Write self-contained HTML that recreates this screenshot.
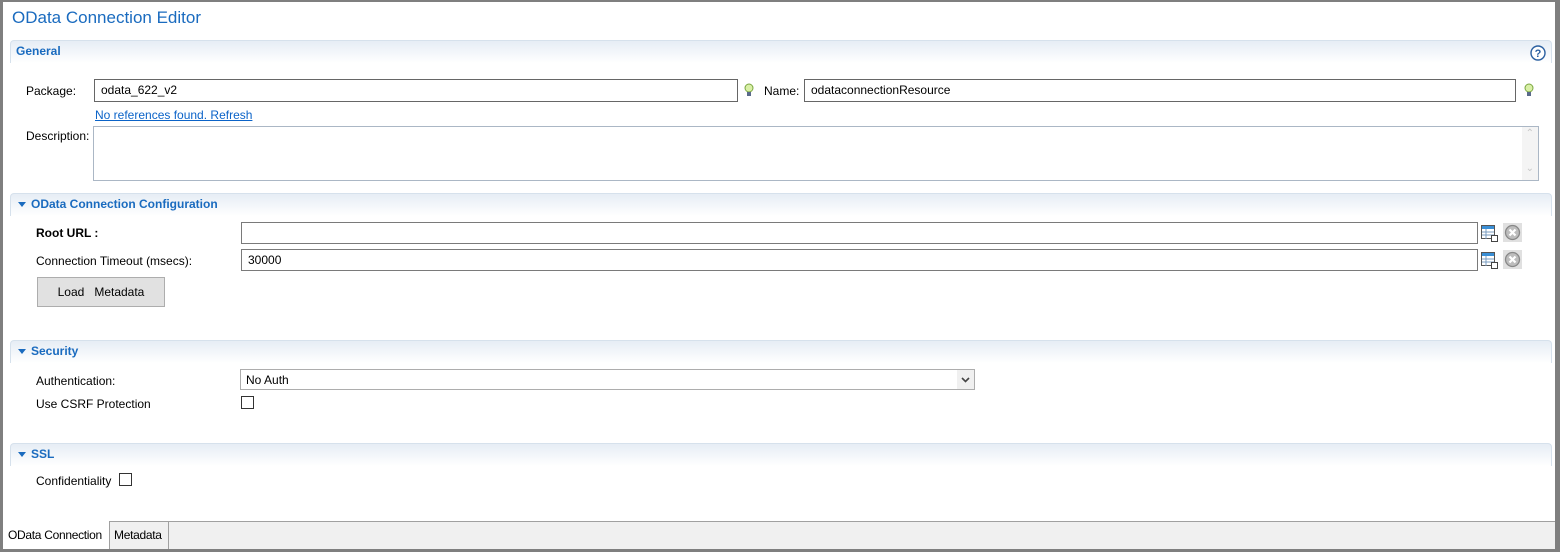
<!DOCTYPE html>
<html><head><meta charset="utf-8"><style>
*{margin:0;padding:0;box-sizing:border-box}
body{width:1560px;height:552px;background:#7f7f7f;font-family:"Liberation Sans",sans-serif;font-size:12px;color:#000;position:relative;overflow:hidden}
#main{position:absolute;left:3px;top:2px;width:1552px;height:547px;background:#fff}
.a{position:absolute;white-space:nowrap}
.title{left:9px;top:6px;font-size:17px;color:#1a6bbf}
.hdr{position:absolute;left:7px;width:1542px;height:23px;border:1px solid #d6e1ec;border-bottom:none;border-radius:4px 4px 0 0;background:linear-gradient(#e6edf5,#ffffff)}
.hdr span{position:absolute;top:3px;font-weight:bold;color:#1a6bbf;font-size:12px}
.tri{position:absolute;left:7px;top:8px;width:0;height:0;border-left:4px solid transparent;border-right:4px solid transparent;border-top:5px solid #1a6bbf}
.inp{position:absolute;border:1px solid #7a7a7a;background:#fff;padding-left:6px;line-height:21px}
.chk{position:absolute;width:13px;height:13px;border:1px solid #333;background:#fff}
.link{color:#0b63c8;text-decoration:underline}
</style></head><body>
<div id="main">
<div class="a title">OData Connection Editor</div>

<div class="hdr" style="top:38px"><span style="left:5px">General</span>
<svg style="position:absolute;right:5px;top:4px" width="16" height="16" viewBox="0 0 16 16"><circle cx="8" cy="8" r="7" fill="#fff" stroke="#2a5fa0" stroke-width="1.4"/><text x="8" y="12" font-size="11" font-weight="bold" text-anchor="middle" fill="#2a5fa0" font-family="Liberation Sans">?</text></svg></div>

<div class="a" style="left:23px;top:82px">Package:</div>
<div class="inp" style="left:91px;top:77px;width:644px;height:23px;border-color:#666">odata_622_v2</div>
<svg class="a" style="left:741px;top:81px" width="10" height="14" viewBox="0 0 10 14"><circle cx="5" cy="5" r="4" fill="#d9f0a6" stroke="#7aa640"/><rect x="3" y="9" width="4" height="4" fill="#5a6a8a"/></svg>
<div class="a" style="left:761px;top:82px">Name:</div>
<div class="inp" style="left:801px;top:77px;width:712px;height:23px;border-color:#666">odataconnectionResource</div>
<svg class="a" style="left:1521px;top:81px" width="10" height="14" viewBox="0 0 10 14"><circle cx="5" cy="5" r="4" fill="#d9f0a6" stroke="#7aa640"/><rect x="3" y="9" width="4" height="4" fill="#5a6a8a"/></svg>
<div class="a link" style="left:92px;top:106px">No references found. Refresh</div>
<div class="a" style="left:23px;top:127px">Description:</div>
<div style="position:absolute;left:90px;top:124px;width:1446px;height:55px;border:1px solid #abb7c5;background:#fff">
<div style="position:absolute;right:0;top:0;width:16px;height:53px;background:#f4f4f4"></div>
<div class="a" style="right:4px;top:1px;color:#c8c8c8;font-size:10px">&#8963;</div>
<div class="a" style="right:4px;top:36px;color:#c8c8c8;font-size:10px">&#8964;</div>
</div>

<div class="hdr" style="top:191px"><div class="tri"></div><span style="left:20px">OData Connection Configuration</span></div>
<div class="a" style="left:33px;top:224px;font-weight:bold">Root URL :</div>
<div class="inp" style="left:238px;top:220px;width:1237px;height:22px"></div>
<div class="a" style="left:33px;top:252px">Connection Timeout (msecs):</div>
<div class="inp" style="left:238px;top:247px;width:1237px;height:22px">30000</div>
<svg class="a" style="left:1478px;top:223px" width="18" height="18" viewBox="0 0 18 18"><rect x="0.5" y="0.5" width="13" height="13" fill="#fff" stroke="#555"/><rect x="1" y="1" width="12" height="3" fill="#3a8fd6"/><path d="M1 7h12M1 10h12M5 4v10" stroke="#7a9cc0"/><rect x="10.5" y="10.5" width="6" height="6" fill="#fff" stroke="#444"/></svg>
<svg class="a" style="left:1500px;top:221px" width="19" height="19" viewBox="0 0 19 19"><rect width="19" height="19" fill="#e0e0e0"/><circle cx="9.5" cy="9.5" r="7" fill="#bdbdbd" stroke="#888" stroke-width="1.3"/><path d="M6.5 6.5l6 6M12.5 6.5l-6 6" stroke="#fff" stroke-width="2.2"/></svg>
<svg class="a" style="left:1478px;top:250px" width="18" height="18" viewBox="0 0 18 18"><rect x="0.5" y="0.5" width="13" height="13" fill="#fff" stroke="#555"/><rect x="1" y="1" width="12" height="3" fill="#3a8fd6"/><path d="M1 7h12M1 10h12M5 4v10" stroke="#7a9cc0"/><rect x="10.5" y="10.5" width="6" height="6" fill="#fff" stroke="#444"/></svg>
<svg class="a" style="left:1500px;top:248px" width="19" height="19" viewBox="0 0 19 19"><rect width="19" height="19" fill="#e0e0e0"/><circle cx="9.5" cy="9.5" r="7" fill="#bdbdbd" stroke="#888" stroke-width="1.3"/><path d="M6.5 6.5l6 6M12.5 6.5l-6 6" stroke="#fff" stroke-width="2.2"/></svg>
<div style="position:absolute;left:34px;top:275px;width:128px;height:30px;background:#e1e1e1;border:1px solid #adadad;text-align:center;line-height:28px">Load&nbsp;&nbsp; Metadata</div>

<div class="hdr" style="top:338px"><div class="tri"></div><span style="left:20px">Security</span></div>
<div class="a" style="left:33px;top:372px">Authentication:</div>
<div style="position:absolute;left:237px;top:367px;width:735px;height:21px;border:1px solid #adadad;background:#fff;padding-left:5px;line-height:20px">No Auth
<div style="position:absolute;right:0;top:0;width:17px;height:19px;background:#f0f0f0"></div>
<svg style="position:absolute;right:4px;top:7px" width="9" height="6" viewBox="0 0 9 6"><path d="M1 1l3.5 3.5L8 1" stroke="#444" stroke-width="1.6" fill="none"/></svg></div>
<div class="a" style="left:33px;top:395px">Use CSRF Protection</div>
<div class="chk" style="left:238px;top:394px"></div>

<div class="hdr" style="top:441px"><div class="tri"></div><span style="left:20px">SSL</span></div>
<div class="a" style="left:33px;top:472px">Confidentiality</div>
<div class="chk" style="left:116px;top:471px"></div>

<div style="position:absolute;left:0;top:519px;width:1552px;height:28px;background:#f0f0f0;border-top:1px solid #a0a0a0"></div>
<div style="position:absolute;left:0;top:519px;width:107px;height:28px;background:#fff;border-right:1px solid #a0a0a0"></div>
<div class="a" style="left:5px;top:526px;letter-spacing:-0.3px">OData Connection</div>
<div style="position:absolute;left:107px;top:519px;width:59px;height:28px;border-right:1px solid #a0a0a0;border-top:1px solid #a0a0a0"></div>
<div class="a" style="left:111px;top:526px;letter-spacing:-0.3px">Metadata</div>
</div>
</body></html>
